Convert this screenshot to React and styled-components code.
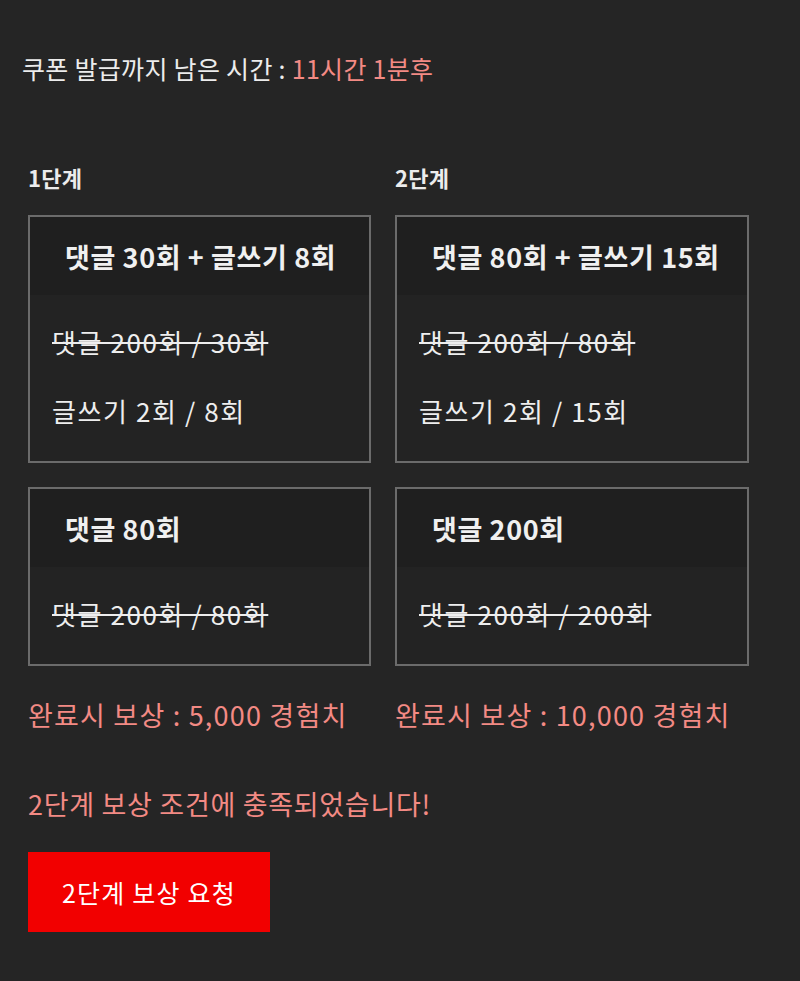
import React from "react";
import styled, { createGlobalStyle } from "styled-components";

const stages = [
    {
        label: "1단계",
        reward: "완료시 보상 : 5,000 경험치",
        cards: [
            {
                title: "댓글 30회 + 글쓰기 8회",
                lines: [
                    { text: "댓글 200회 / 30회", done: true },
                    { text: "글쓰기 2회 / 8회", done: false },
                ],
            },
            {
                title: "댓글 80회",
                lines: [{ text: "댓글 200회 / 80회", done: true }],
            },
        ],
    },
    {
        label: "2단계",
        reward: "완료시 보상 : 10,000 경험치",
        cards: [
            {
                title: "댓글 80회 + 글쓰기 15회",
                lines: [
                    { text: "댓글 200회 / 80회", done: true },
                    { text: "글쓰기 2회 / 15회", done: false },
                ],
            },
            {
                title: "댓글 200회",
                lines: [{ text: "댓글 200회 / 200회", done: true }],
            },
        ],
    },
];

export default function App() {
    return (
        <>
            <GlobalStyle />
            <Page>
                <Timer>
                    쿠폰 발급까지 남은 시간 : <Highlight>11시간 1분후</Highlight>
                </Timer>
                <Stages>
                    {stages.map(stage => (
                        <Stage key={stage.label}>
                            <StageLabel>{stage.label}</StageLabel>
                            {stage.cards.map(card => (
                                <Card key={card.title}>
                                    <CardHeader>{card.title}</CardHeader>
                                    <CardBody>
                                        {card.lines.map(line => (
                                            <Line key={line.text} done={line.done}>{line.text}</Line>
                                        ))}
                                    </CardBody>
                                </Card>
                            ))}
                            <Reward>{stage.reward}</Reward>
                        </Stage>
                    ))}
                </Stages>
                <Message>2단계 보상 조건에 충족되었습니다!</Message>
                <RequestButton>2단계 보상 요청</RequestButton>
            </Page>
        </>
    );
}

// ::::::::::Styled-Components::::::::::
const GlobalStyle = createGlobalStyle`
    * { box-sizing: border-box; }
    body {
        margin: 0;
        background-color: #252525;
        font-family: "Noto Sans CJK KR", "Noto Sans", sans-serif;
    }
`
const Page = styled.div`
    width: 800px;
    min-height: 981px;
    background-color: #252525;
    padding: 48px 0 0 28px;
    color: #ececec;
`
const Timer = styled.div`
    font-size: 25px;
    line-height: 40px;
    margin-left: -6px;
    color: #ececec;
    letter-spacing: 0.3px;
`
const Highlight = styled.span`
    color: #f38a84;
`
const Stages = styled.div`
    display: grid;
    grid-template-columns: 343px 354px;
    column-gap: 24px;
    margin-top: 75px;
`
const Stage = styled.div`
    display: flex;
    flex-direction: column;
`
const StageLabel = styled.div`
    font-size: 22px;
    font-weight: 700;
    line-height: 28px;
    margin-bottom: 24px;
    letter-spacing: 0.3px;
`
const Card = styled.div`
    border: 2px solid #6b6b6b;
    background-color: #232323;
    margin-bottom: 24px;
`
const CardHeader = styled.div`
    height: 78px;
    display: flex;
    align-items: center;
    padding-left: 35px;
    background-color: #1f1f1f;
    font-size: 27px;
    font-weight: 700;
    letter-spacing: 0.6px;
    color: #f0f0f0;
`
const CardBody = styled.div`
    display: flex;
    flex-direction: column;
    padding: 30px 0 33px 22px;
    gap: 35px;
`
const Line = styled.div`
    font-size: 26px;
    line-height: 34px;
    letter-spacing: 1.6px;
    color: #eeeeee;
    text-decoration: ${props => props.done ? "line-through" : "none"};
    text-decoration-thickness: 2px;
`
const Reward = styled.div`
    font-size: 27px;
    line-height: 36px;
    margin-top: 7px;
    color: #f38a84;
    letter-spacing: 1.2px;
`
const Message = styled.div`
    font-size: 27px;
    line-height: 36px;
    margin-top: 53px;
    color: #f38a84;
    letter-spacing: 0.7px;
`
const RequestButton = styled.button`
    display: block;
    width: 242px;
    height: 80px;
    margin-top: 30px;
    border: none;
    background-color: #f20000;
    color: #ffffff;
    font-family: "Noto Sans CJK KR", "Noto Sans", sans-serif;
    font-size: 25px;
    letter-spacing: 1.2px;
`
